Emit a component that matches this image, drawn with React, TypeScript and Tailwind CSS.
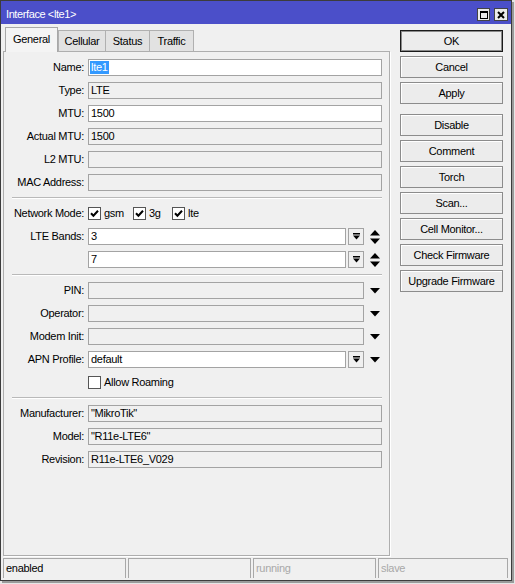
import React from 'react';

// Winbox-style "Interface <lte1>" dialog

type BoxProps = {
  value?: string;
  white?: boolean;
  selected?: boolean;
  w: string;
};

const Box: React.FC<BoxProps> = ({ value, white, selected, w }) => (
  <div
    className={`${w} h-[17px] shrink-0 overflow-hidden whitespace-nowrap border border-[#a3a3a3] leading-[15px] ${
      white ? 'bg-white' : 'bg-[#f0f0f0]'
    } ${selected ? 'pl-[1px]' : 'pl-[2px]'}`}
  >
    {selected ? (
      <span className="inline-block bg-[#3399ff] px-[1px] leading-[13px] text-white">{value}</span>
    ) : (
      value
    )}
  </div>
);

const Row: React.FC<{ label?: string; children?: React.ReactNode }> = ({ label, children }) => (
  <div className="flex h-[17px] items-center">
    <div className="w-[80px] shrink-0 text-right whitespace-nowrap">{label ? `${label}:` : ''}</div>
    <div className="ml-[4px] flex items-center">{children}</div>
  </div>
);

const Sep = () => <div className="ml-[8px] h-[2px] w-[370px] border-t border-b border-t-[#b9b9b9] border-b-white" />;

const Check: React.FC<{ checked?: boolean }> = ({ checked }) => (
  <div className="flex h-[13px] w-[13px] shrink-0 items-center justify-center border border-[#555] bg-white">
    {checked && (
      <svg width="11" height="11" viewBox="0 0 11 11">
        <path d="M2 5.3 L4.4 7.8 L9 2.8" fill="none" stroke="#000" strokeWidth="2" />
      </svg>
    )}
  </div>
);

const DropBox = () => (
  <div className="ml-[2px] flex h-[17px] w-[16px] shrink-0 items-center justify-center border border-[#a3a3a3] bg-[#f0f0f0]">
    <svg width="7" height="7" viewBox="0 0 7 7">
      <rect x="0" y="0" width="7" height="1.5" fill="#000" />
      <polygon points="0,2.5 7,2.5 3.5,6.5" fill="#000" />
    </svg>
  </div>
);

const UpDown = () => (
  <svg className="ml-[6px] shrink-0" width="10" height="14" viewBox="0 0 10 14">
    <polygon points="5,0 10,5.5 0,5.5" fill="#000" />
    <polygon points="0,8.5 10,8.5 5,14" fill="#000" />
  </svg>
);

const Down = () => (
  <svg className="ml-[6px] shrink-0" width="10" height="6" viewBox="0 0 10 6">
    <polygon points="0,0 10,0 5,5.5" fill="#000" />
  </svg>
);

const Btn: React.FC<{ label: string; primary?: boolean; extra?: string }> = ({ label, primary, extra = '' }) => (
  <div
    className={`flex h-[22px] w-[103px] items-center justify-center bg-[#ececec] ${extra} ${
      primary
        ? 'border border-[#1a1a1a] shadow-[inset_0_0_0_1px_#8a8a8a]'
        : 'border border-[#8c8c8c] shadow-[inset_1px_1px_0_#fff]'
    }`}
  >
    {label}
  </div>
);

export default function App() {
  return (
    <div className="h-[584px] w-[515px] bg-[#e6e6e6] font-['Liberation_Sans',Arial,sans-serif] text-[11px] tracking-[-0.3px] text-black">
      <div className="flex h-[581px] w-[512px] flex-col border border-[#3c3c3c] bg-[#f0f0f0] shadow-[2px_2px_0_#9a9a9a]">
        {/* title bar */}
        <div className="flex h-[23px] shrink-0 items-center bg-[#4b4fc9] pl-[5px] pr-[3px] pt-[4px]">
          <div className="flex-1 tracking-[-0.4px] text-white">Interface &lt;lte1&gt;</div>
          <div className="flex h-[13px] w-[13px] items-center justify-center border border-[#444] bg-[#ececec]">
            <div className="h-[8px] w-[8px] border border-t-2 border-black" />
          </div>
          <div className="ml-[4px] flex h-[13px] w-[14px] items-center justify-center border border-[#444] bg-[#ececec]">
            <svg width="8" height="8" viewBox="0 0 8 8">
              <path d="M1 1 L7 7 M7 1 L1 7" stroke="#000" strokeWidth="2" />
            </svg>
          </div>
        </div>

        <div className="flex min-h-0 flex-1 pl-[2px]">
          {/* left: tabs + panel */}
          <div className="flex w-[387px] flex-col">
            <div className="flex h-[27px] shrink-0 items-end pl-[2px]">
              <div className="relative z-10 -mb-px flex h-[25px] w-[53px] items-center justify-center border border-b-0 border-[#a8a8a8] bg-[#f4f4f4] pb-[2px]">
                General
              </div>
              <div className="flex h-[21px] w-[48px] items-center justify-center border border-b-0 border-[#b0b0b0] bg-[#e2e2e2]">
                Cellular
              </div>
              <div className="-ml-px flex h-[21px] w-[45px] items-center justify-center border border-b-0 border-[#b0b0b0] bg-[#e2e2e2]">
                Status
              </div>
              <div className="-ml-px flex h-[21px] w-[45px] items-center justify-center border border-b-0 border-[#b0b0b0] bg-[#e2e2e2]">
                Traffic
              </div>
            </div>

            <div className="flex flex-1 flex-col gap-[6px] border border-[#aeaeae] bg-[#f0f0f0] pt-[7px] shadow-[1px_1px_0_#fff]">
              <Row label="Name">
                <Box w="w-[294px]" white selected value="lte1" />
              </Row>
              <Row label="Type">
                <Box w="w-[294px]" value="LTE" />
              </Row>
              <Row label="MTU">
                <Box w="w-[294px]" white value="1500" />
              </Row>
              <Row label="Actual MTU">
                <Box w="w-[294px]" value="1500" />
              </Row>
              <Row label="L2 MTU">
                <Box w="w-[294px]" />
              </Row>
              <Row label="MAC Address">
                <Box w="w-[294px]" />
              </Row>
              <Sep />
              <Row label="Network Mode">
                <div className="flex w-[45px] items-center">
                  <Check checked />
                  <span className="ml-[3px]">gsm</span>
                </div>
                <div className="flex w-[39px] items-center">
                  <Check checked />
                  <span className="ml-[3px]">3g</span>
                </div>
                <div className="flex items-center">
                  <Check checked />
                  <span className="ml-[3px]">lte</span>
                </div>
              </Row>
              <Row label="LTE Bands">
                <Box w="w-[258px]" white value="3" />
                <DropBox />
                <UpDown />
              </Row>
              <Row>
                <Box w="w-[258px]" white value="7" />
                <DropBox />
                <UpDown />
              </Row>
              <Sep />
              <Row label="PIN">
                <Box w="w-[276px]" />
                <Down />
              </Row>
              <Row label="Operator">
                <Box w="w-[276px]" />
                <Down />
              </Row>
              <Row label="Modem Init">
                <Box w="w-[276px]" />
                <Down />
              </Row>
              <Row label="APN Profile">
                <Box w="w-[258px]" white value="default" />
                <DropBox />
                <Down />
              </Row>
              <Row>
                <Check />
                <span className="ml-[3px]">Allow Roaming</span>
              </Row>
              <Sep />
              <Row label="Manufacturer">
                <Box w="w-[294px]" value={'"MikroTik"'} />
              </Row>
              <Row label="Model">
                <Box w="w-[294px]" value={'"R11e-LTE6"'} />
              </Row>
              <Row label="Revision">
                <Box w="w-[294px]" value="R11e-LTE6_V029" />
              </Row>
            </div>
          </div>

          {/* right: buttons */}
          <div className="ml-[10px] flex flex-col gap-[4px] pt-[6px]">
            <Btn label="OK" primary />
            <Btn label="Cancel" />
            <Btn label="Apply" />
            <Btn label="Disable" extra="mt-[6px]" />
            <Btn label="Comment" />
            <Btn label="Torch" />
            <Btn label="Scan..." />
            <Btn label="Cell Monitor..." />
            <Btn label="Check Firmware" />
            <Btn label="Upgrade Firmware" />
          </div>
        </div>

        {/* status bar */}
        <div className="mt-[2px] mb-[2px] flex h-[20px] shrink-0 gap-[2px] pl-[2px] pr-[3px]">
          <div className="w-[123px] border border-b-0 border-[#a8a8a8] pl-[2px] leading-[19px]">enabled</div>
          <div className="w-[123px] border border-b-0 border-[#a8a8a8]" />
          <div className="w-[123px] border border-b-0 border-[#a8a8a8] pl-[2px] leading-[19px] text-[#a8a8a8]">running</div>
          <div className="w-[130px] border border-b-0 border-[#a8a8a8] pl-[2px] leading-[19px] text-[#a8a8a8]">slave</div>
        </div>
      </div>
    </div>
  );
}
